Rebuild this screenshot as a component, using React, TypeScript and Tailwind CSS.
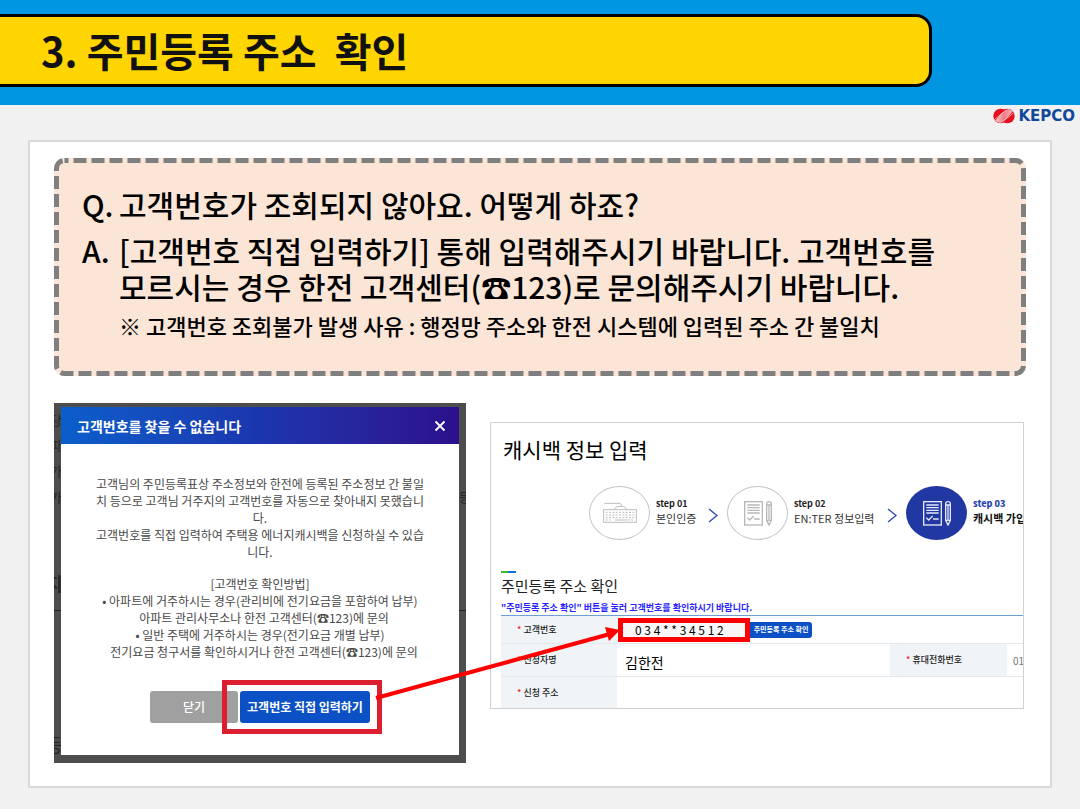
import type { ReactNode } from 'react';

function KepcoLogo() {
  return (
    <div className="flex items-center gap-[3px]">
      <svg width="22" height="16" viewBox="0 0 66 46" aria-hidden="true">
        <defs>
          <clipPath id="disc-left">
            <circle cx="23" cy="23" r="22" />
          </clipPath>
          <clipPath id="disc-right">
            <circle cx="43" cy="23" r="22" />
          </clipPath>
          <linearGradient id="fade" x1="0" y1="0" x2="1" y2="0">
            <stop offset="0" stopColor="#f9cfd2" />
            <stop offset="0.5" stopColor="#ee7a82" />
            <stop offset="1" stopColor="#f6b9bd" />
          </linearGradient>
        </defs>
        <circle cx="23" cy="23" r="22" fill="#e60f20" />
        <circle cx="43" cy="23" r="22" fill="#e60f20" />
        <path d="M6 38 L24 16 L46 1 L60 8 L42 30 L22 45 Z" fill="url(#fade)" clipPath="url(#disc-left)" />
        <path d="M6 38 L24 16 L46 1 L60 8 L42 30 L22 45 Z" fill="url(#fade)" clipPath="url(#disc-right)" />
        <path d="M4 34 L40 5" stroke="#fbdfe1" strokeWidth="2" />
        <path d="M26 42 L62 14" stroke="#fbdfe1" strokeWidth="2" />
      </svg>
      <span className="font-['DejaVu_Sans',sans-serif] text-[15px] leading-4 font-bold text-[#10489e]">KEPCO</span>
    </div>
  );
}

function Callout() {
  return (
    <section className="relative bg-[#fbe5d6] px-7 pt-7 pb-8 text-black rounded-[10px]">
      <svg className="pointer-events-none absolute inset-0 h-full w-full" aria-hidden="true">
        <rect
          x="2.5"
          y="2.5"
          rx="8"
          className="h-[calc(100%-5px)] w-[calc(100%-5px)]"
          fill="none"
          stroke="#7f7f7f"
          strokeWidth="5"
          strokeDasharray="13 5"
          strokeDashoffset="9"
        />
      </svg>
      <div className="flex flex-col gap-2.5 text-[30px] leading-9 font-medium">
        <p className="flex">
          <span className="w-[37px] shrink-0">Q.</span>
          <span>고객번호가 조회되지 않아요. 어떻게 하죠?</span>
        </p>
        <p className="flex">
          <span className="w-[37px] shrink-0">A.</span>
          <span>
            [고객번호 직접 입력하기] 통해 입력해주시기 바랍니다. 고객번호를
            <br />
            모르시는 경우 한전 고객센터(☎123)로 문의해주시기 바랍니다.
          </span>
        </p>
      </div>
      <p className="mt-0.5 pl-[37px] text-[22px] leading-[38px] font-medium">
        ※ 고객번호 조회불가 발생 사유 : 행정망 주소와 한전 시스템에 입력된 주소 간 불일치
      </p>
    </section>
  );
}

function Backdrop() {
  return (
    <div className="absolute inset-0 overflow-hidden text-[13px] leading-4 text-[#262626]" aria-hidden="true">
      <span className="absolute top-[9px] -left-1">당</span>
      <span className="absolute top-[34px] -left-1">파</span>
      <span className="absolute top-[60px] -left-1">가</span>
      <span className="absolute top-[86px] -left-1">카</span>
      <span className="absolute top-[86px] left-[405px]">등</span>
      <span className="absolute top-[172px] -left-2 text-[18px] font-bold">지</span>
      <span className="absolute top-[333px] -left-2 text-[18px]">등</span>
      <div className="absolute inset-x-0 top-[207px] h-px bg-[#222]" />
    </div>
  );
}

function NotFoundDialog() {
  return (
    <div className="relative w-[412px] shrink-0 bg-[#4d4d4d] px-[7px] pt-1 pb-2">
      <Backdrop />
      <div role="dialog" aria-labelledby="dialog-title" className="relative bg-white pb-8">
        <header className="flex h-[37px] items-center justify-between bg-linear-to-r from-[#0a5ecb] via-[#1b36ae] to-[#2c0f8c] pr-3 pl-4">
          <h2 id="dialog-title" className="text-[14px] leading-5 font-bold text-white">
            고객번호를 찾을 수 없습니다
          </h2>
          <button type="button" aria-label="닫기" className="p-px">
            <svg width="12" height="12" viewBox="0 0 12 12" stroke="#fff" strokeWidth="1.8" aria-hidden="true">
              <path d="M1.5 1.5 L10.5 10.5 M10.5 1.5 L1.5 10.5" />
            </svg>
          </button>
        </header>
        <div className="mt-[31px] flex flex-col gap-[15px] text-center text-[12px] leading-[17px] text-[#484848]">
          <p>
            고객님의 주민등록표상 주소정보와 한전에 등록된 주소정보 간 불일
            <br />
            치 등으로 고객님 거주지의 고객번호를 자동으로 찾아내지 못했습니
            <br />
            다.
            <br />
            고객번호를 직접 입력하여 주택용 에너지캐시백을 신청하실 수 있습
            <br />
            니다.
          </p>
          <div>
            <p>[고객번호 확인방법]</p>
            <p>• 아파트에 거주하시는 경우(관리비에 전기요금을 포함하여 납부)</p>
            <p className="pl-2">아파트 관리사무소나 한전 고객센터(☎123)에 문의</p>
            <p>• 일반 주택에 거주하시는 경우(전기요금 개별 납부)</p>
            <p className="pl-2">전기요금 청구서를 확인하시거나 한전 고객센터(☎123)에 문의</p>
          </div>
        </div>
        <div className="mt-[31px] flex items-center justify-center gap-0.5">
          <button type="button" className="h-8 w-[88px] rounded-[3px] bg-[#a0a0a0] text-[12px] font-medium text-white">
            닫기
          </button>
          <div className="relative">
            <button type="button" className="h-8 w-[130px] rounded-[3px] bg-[#0b51c5] text-[12px] font-bold text-white">
              고객번호 직접 입력하기
            </button>
            <div className="pointer-events-none absolute -inset-y-[11px] right-[-12px] left-[-18px] border-[5px] border-[#dc1f2e]" />
          </div>
        </div>
      </div>
    </div>
  );
}

function KeyboardIcon() {
  return (
    <svg width="34" height="22" viewBox="0 0 102 66" fill="none" stroke="#bdbdbd" strokeWidth="3" aria-hidden="true">
      <path d="M4 4 H48 Q56 4 56 13" />
      <path d="M32 23 Q36 13 51 13 Q68 13 71 23" />
      <rect x="2" y="23" width="98" height="38" />
      <path d="M8 31 H94 M8 39 H94 M8 47 H94" strokeDasharray="6 4" />
      <path d="M8 54 H28 M74 54 H94" strokeDasharray="6 4" />
      <path d="M36 54 H72" />
    </svg>
  );
}

function FormIcon({ color }: { color: string }) {
  return (
    <svg width="28" height="25" viewBox="0 0 84 75" fill="none" stroke={color} strokeWidth="4" aria-hidden="true">
      <rect x="2" y="2" width="53" height="70" />
      <path d="M10 12 H47 M10 20 H47 M10 28 H47 M10 36 H47 M30 54 H47" />
      <path d="M10 50 L17 57 L29 45" />
      <path d="M68 8 Q68 2 75 2 Q82 2 82 8 V58 L75 72 L68 58 Z M68 12 H82 M68 58 H82 M75 13 V58" />
    </svg>
  );
}

function StepBadge({ active, children }: { active?: boolean; children: ReactNode }) {
  return (
    <span
      className={
        active
          ? 'flex h-[54px] w-[61px] shrink-0 items-center justify-center rounded-[50%] bg-[#2138a2]'
          : 'flex h-[54px] w-[61px] shrink-0 items-center justify-center rounded-[50%] border border-[#c4c4c4]'
      }
    >
      {children}
    </span>
  );
}

function StepArrow() {
  return (
    <svg className="mx-[9px] mt-1 shrink-0" width="10" height="15" viewBox="0 0 10 15" fill="none" stroke="#2a45b0" strokeWidth="1.3" aria-hidden="true">
      <path d="M1 1 L9 7.5 L1 14" />
    </svg>
  );
}

function Steps() {
  return (
    <ol className="flex pl-[89px] text-[11px] leading-[14px] whitespace-nowrap text-[#333]">
      <li className="flex items-center">
        <StepBadge>
          <KeyboardIcon />
        </StepBadge>
        <p className="ml-1.5 w-[43px] -mt-1">
          <b className="block text-[9px] text-[#222]">step 01</b>본인인증
        </p>
        <StepArrow />
      </li>
      <li className="flex items-center">
        <StepBadge>
          <FormIcon color="#b8b8b8" />
        </StepBadge>
        <p className="ml-1.5 w-[84px] -mt-1">
          <b className="block text-[9px] text-[#222]">step 02</b>EN:TER 정보입력
        </p>
        <StepArrow />
      </li>
      <li className="flex items-center">
        <StepBadge active>
          <FormIcon color="#e4e8f8" />
        </StepBadge>
        <p className="ml-1.5 -mt-1 font-bold text-[#111]">
          <b className="block text-[9px] text-[#2a45b0]">step 03</b>캐시백 가입
        </p>
      </li>
    </ol>
  );
}

function FieldHead({ children, htmlFor }: { children: ReactNode; htmlFor?: string }) {
  return (
    <th scope="row" className="border-b border-[#e4e7ea] bg-[#f0f4f7] pl-4 text-left text-[9px] font-medium text-[#222]">
      <span className="text-[#f0222a]">*</span> <label htmlFor={htmlFor}>{children}</label>
    </th>
  );
}

function CashbackForm() {
  return (
    <div className="mt-[19px] h-[287px] min-w-0 flex-1 overflow-hidden border border-[#d0d0d0] bg-white pl-2.5">
      <h2 className="mt-[11px] ml-0.5 text-[21px] leading-[30px] text-black">캐시백 정보 입력</h2>
      <div className="mt-[22px] -ml-px">
        <Steps />
      </div>
      <div className="mt-[31px] h-0.5 w-[15px] bg-linear-to-r from-[#3fba2c] from-50% to-[#0b73d9] to-50%" />
      <h3 className="mt-0.5 text-[15px] leading-[22px] text-[#222]">주민등록 주소 확인</h3>
      <p className="mt-1 text-[9px] leading-[14px] font-bold whitespace-nowrap text-[#2a1fff]">
        "주민등록 주소 확인" 버튼을 눌러 고객번호를 확인하시기 바랍니다.
      </p>
      <table className="w-[660px] table-fixed border-collapse border-t border-[#6b9fd6]">
        <colgroup>
          <col className="w-[116px]" />
          <col className="w-[273px]" />
          <col className="w-[117px]" />
          <col />
        </colgroup>
        <tbody>
          <tr className="h-7">
            <FieldHead htmlFor="customer-number">고객번호</FieldHead>
            <td colSpan={3} className="border-b border-[#e4e7ea] pl-px">
              <div className="flex items-center">
                <input
                  id="customer-number"
                  readOnly
                  defaultValue="0 3 4 * * 3 4 5 1 2"
                  className="h-6 w-[132px] border-[5px] border-[#ff0000] bg-[#f7f7f7] pl-3 text-[12px] leading-3 text-black outline-none"
                />
                <button type="button" className="h-4 w-[62px] rounded-r-[3px] bg-[#0b51c5] text-[7px] font-bold whitespace-nowrap text-white">
                  주민등록 주소 확인
                </button>
              </div>
            </td>
          </tr>
          <tr className="h-[33px]">
            <FieldHead>신청자명</FieldHead>
            <td className="border-b border-[#e4e7ea] pt-1 pl-2 text-[14px] leading-5 text-black">김한전</td>
            <FieldHead>휴대전화번호</FieldHead>
            <td className="border-b border-[#e4e7ea] pl-1.5 text-[10px] text-[#777]">010</td>
          </tr>
          <tr className="h-[33px]">
            <FieldHead>신청 주소</FieldHead>
            <td colSpan={3} />
          </tr>
        </tbody>
      </table>
    </div>
  );
}

export default function App() {
  return (
    <div className="flex min-h-screen flex-col bg-[#f1f1f1] font-['Noto_Sans_CJK_KR',sans-serif]">
      <header className="bg-[#0096e1] pt-3.5 pr-[148px] pb-[18px]">
        <h1 className="rounded-r-[16px] border-y-[3px] border-r-[3px] border-black bg-[#ffd500] pl-[41px] text-[40px] leading-[67px] font-bold text-[#111]">
          3. 주민등록 주소&nbsp; 확인
        </h1>
      </header>
      <div className="flex h-[35px] items-start justify-end pt-[3px] pr-[5px]">
        <KepcoLogo />
      </div>
      <main className="mx-7 mb-[21px] grow border-2 border-[#d9d9d9] bg-white px-6 pt-4 pb-[23px]">
        <Callout />
        <div className="relative mt-[27px] flex items-start gap-6 pr-0.5">
          <NotFoundDialog />
          <CashbackForm />
          <svg className="pointer-events-none absolute top-[220px] left-[320px]" width="250" height="80" viewBox="0 0 250 80" aria-hidden="true">
            <path d="M2 75 L236 11" stroke="#ff0000" strokeWidth="4" />
            <path d="M246 7 L231 4 L235 18 Z" fill="#ff0000" />
          </svg>
        </div>
      </main>
    </div>
  );
}
